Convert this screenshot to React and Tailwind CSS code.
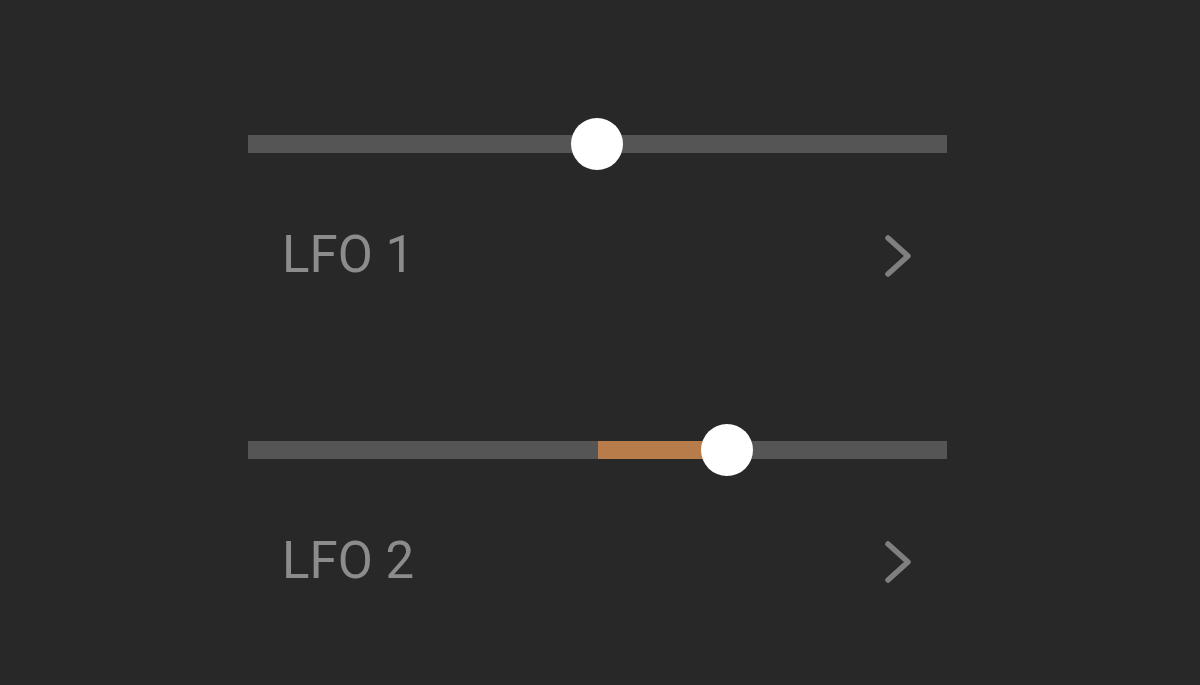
import React from "react";

function Slider({ thumb, fillFrom, fillTo }) {
  return (
    <div className="relative h-[52px] flex items-center">
      <div className="relative w-full h-[18px] bg-[#555555]">
        {fillFrom !== undefined && (
          <div
            className="absolute top-0 h-full bg-[#b87c4b]"
            style={{ left: `${fillFrom}px`, width: `${fillTo - fillFrom}px` }}
          />
        )}
      </div>
      <div
        className="absolute top-0 w-[52px] h-[52px] rounded-full bg-white"
        style={{ left: `${thumb - 26}px` }}
      />
    </div>
  );
}

function Row({ label }) {
  return (
    <div className="mt-[54px] h-[60px] flex items-center justify-between pl-[34px] pr-[34px]">
      <span
        className="text-[51px] leading-none text-[#8c8c8c]"
        style={{ fontFamily: "Roboto, 'Noto Sans', sans-serif" }}
      >
        {label}
      </span>
      <svg width="30" height="46" viewBox="0 0 30 46" fill="none" className="mt-[3px]">
        <polyline
          points="5,5 25,23 5,41"
          stroke="#7f7f7f"
          strokeWidth="5.5"
          strokeLinecap="round"
          strokeLinejoin="round"
        />
      </svg>
    </div>
  );
}

export default function App() {
  return (
    <div className="w-[1200px] h-[685px] bg-[#282828] overflow-hidden">
      <div className="pt-[118px] ml-[248px] w-[699px]">
        <Slider thumb={349} />
        <Row label="LFO 1" />
        <div className="mt-[140px]">
          <Slider thumb={479} fillFrom={350} fillTo={470} />
          <Row label="LFO 2" />
        </div>
      </div>
    </div>
  );
}
